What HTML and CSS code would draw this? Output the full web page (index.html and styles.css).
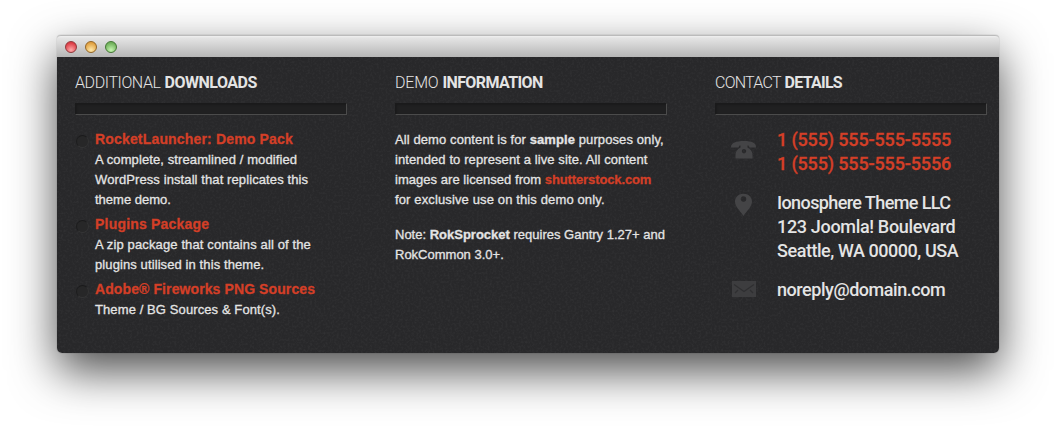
FILE: index.html
```
<!DOCTYPE html>
<html lang="en">
<head>
<meta charset="utf-8">
<title>Ionosphere Theme</title>
<link rel="stylesheet" href="styles.css">
</head>
<body>
<main class="window">
  <header class="titlebar">
    <span class="light red"></span><span class="light amber"></span><span class="light green"></span>
  </header>
  <div class="content">
    <svg class="grain" width="942" height="296" aria-hidden="true">
      <filter id="grain"><feTurbulence type="fractalNoise" baseFrequency="0.45" numOctaves="2" seed="4"/><feColorMatrix values="0 0 0 0 1  0 0 0 0 1  0 0 0 0 1  0.5 0 0 0 -0.2"/></filter>
      <rect width="942" height="296" filter="url(#grain)"/>
    </svg>
    <section class="column">
      <h2><span class="h1a">ADDITIONAL</span> <b class="h1b">DOWNLOADS</b></h2>
      <div class="divider"></div>
      <ul class="downloads">
        <li><a class="l1">RocketLauncher: Demo Pack</a><br><span class="l2">A complete, streamlined / modified</span><br><span class="l3">WordPress install that replicates this</span><br><span class="l4">theme demo.</span></li>
        <li><a class="l5">Plugins Package</a><br><span class="l6">A zip package that contains all of the</span><br><span class="l7">plugins utilised in this theme.</span></li>
        <li><a class="l8">Adobe® Fireworks PNG Sources</a><br><span class="l9">Theme / BG Sources &amp; Font(s).</span></li>
      </ul>
    </section>
    <section class="column">
      <h2><span class="h2a">DEMO</span> <b class="h2b">INFORMATION</b></h2>
      <div class="divider"></div>
      <p><span class="m1">All demo content is for <b>sample</b> purposes only,</span><br><span class="m2">intended to represent a live site. All content</span><br><span class="m3">images are licensed from <a>shutterstock.com</a></span><br><span class="m4">for exclusive use on this demo only.</span></p>
      <p><span class="m5">Note: <b>RokSprocket</b> requires Gantry 1.27+ and</span><br><span class="m6">RokCommon 3.0+.</span></p>
    </section>
    <section class="column">
      <h2><span class="h3a">CONTACT</span> <b class="h3b">DETAILS</b></h2>
      <div class="divider"></div>
      <div class="contact phone">
        <svg width="28" height="20" viewBox="0 0 28 20"><path fill-rule="evenodd" d="M1 7C1 3 6 1 14 1s12 2 12 6v.5h-6.500L18.500 5.500h-1V7.500C21 9 22.500 12 22.500 15v3.500H5.500V15c0-3 1.500-6 5-7.500V5.500h-1L8.500 7.500H1zM14 9a2.200 2.200 0 1 0 .01 0z"/></svg>
        <div><span class="c1">1 (555) 555-555-5555</span><br><span class="c1">1 (555) 555-555-5556</span></div>
      </div>
      <div class="contact address">
        <svg width="28" height="24" viewBox="0 0 28 24"><path fill-rule="evenodd" d="M13.500 .7C8.500.7 5 4.200 5 8.500c0 5 4.500 8.500 8.500 14.500C17.500 17 22 13.500 22 8.500 22 4.200 18.500.7 13.500.7zM13.500 3.200a2.800 2.800 0 1 1-.01 0z"/></svg>
        <div><span class="c3">Ionosphere Theme LLC</span><br><span class="c4">123 Joomla! Boulevard</span><br><span class="c5">Seattle, WA 00000, USA</span></div>
      </div>
      <div class="contact mail">
        <svg width="28" height="18" viewBox="0 0 28 18"><path d="M2 1h24v16H2z"/><path class="fold" d="M4 4.500l10 7 10-7M5 13l3-3M23 13l-3-3"/></svg>
        <div><span class="c6">noreply@domain.com</span></div>
      </div>
    </section>
  </div>
</main>
</body>
</html>
```
FILE: styles.css
```
body { margin: 0; padding: 35px 57px 0; height: 432px; box-sizing: border-box; overflow: hidden; background: #fff; }
.window { width: 942px; height: 318px; border-radius: 4px 4px 5px 5px; box-shadow: 0 0 1px rgba(0,0,0,.5), 0 18px 46px rgba(0,0,0,.7); }
.titlebar { height: 22px; box-sizing: border-box; padding: 5px 8px; display: flex; gap: 8px; border-top: 1px solid #bbb; border-radius: 4px 4px 0 0; background: linear-gradient(#f0f0f0 0, #e4e4e4 2px, #b6b6b6 100%); }
.light { width: 12px; height: 12px; box-sizing: border-box; border-radius: 50%; border: 1px solid; }
.red { border-color: #91383b; background: radial-gradient(circle at 50% 80%, #ffaaaa, #dc3c45 75%); }
.amber { border-color: #936525; background: radial-gradient(circle at 50% 80%, #ffe9aa, #e0a040 75%); }
.green { border-color: #437633; background: radial-gradient(circle at 50% 80%, #c5f5b0, #6fb05a 75%); }
.content { position: relative; height: 296px; box-sizing: border-box; padding: 15px 12px 0 18px; display: grid; grid-template-columns: repeat(3, 272px); column-gap: 48px; background: #28282a; border-radius: 0 0 5px 5px; overflow: hidden; color: #e4e4e4; font: 13px/20px "Liberation Sans", Arial, sans-serif; white-space: nowrap; }
.grain { position: absolute; left: 0; top: 0; opacity: .18; }
.column { position: relative; min-width: 0; }
h2 { margin: 0; font: 300 16px/21px Roboto, sans-serif; height: 31px; }
h2 b { font-weight: 700; }
.divider { height: 12px; box-sizing: border-box; background: #202021; border: 1px solid #1a1a1b; border-right-color: #4b4b4b; border-bottom-color: #4b4b4b; margin-bottom: 15px; box-shadow: inset 1px 1px 2px rgba(0,0,0,.2); }
a { color: #d43f27; font-weight: 700; }
.downloads { list-style: none; margin: 0; padding: 0; }
.downloads li { position: relative; padding-left: 20px; margin-bottom: 5px; -webkit-text-stroke: .3px; }
.downloads li a { display: inline-block; height: 20px; vertical-align: top; font-size: 14px; line-height: 19px; }
.downloads li::before { content: ""; position: absolute; left: 1px; top: 5px; width: 13px; height: 13px; box-sizing: border-box; border-radius: 50%; border: 1px solid; border-color: #1b1b1c #333334 #363637 #1d1d1e; background: #272728; }
p { margin: 0 0 15px; -webkit-text-stroke: .3px; }
.contact { display: flex; gap: 19px; padding-left: 15px; font: 500 18px/24px Roboto, sans-serif; }
.contact svg { flex: none; fill: #444446; }
.contact.mail svg { fill: #3d3d3f; }
.contact .fold { fill: none; stroke: #2f2f31; stroke-width: 1.3; }
.phone { color: #d43f27; margin: -2px 0 15px; -webkit-text-stroke: .3px; }
.phone svg { margin-top: 12px; }
.address { margin-bottom: 15px; }
.address svg { margin-top: 2px; }
.mail svg { margin-top: 2px; }
/* tracking for individual lines */
.h1a { letter-spacing: -.4px; } .h1b { letter-spacing: -.5px; }
.h2a { letter-spacing: -.2px; } .h2b { letter-spacing: -.6px; }
.h3a { letter-spacing: -.75px; } .h3b { letter-spacing: -.75px; }
.l1 { letter-spacing: .17px; } .l5 { letter-spacing: .2px; } .l8 { letter-spacing: .1px; }
.l2, .l3, .l7, .l9, .m1, .m2 { letter-spacing: .1px; }
.l6, .m4 { letter-spacing: .13px; }
.m3 { letter-spacing: .04px; } .m3 a { letter-spacing: -.12px; }
.c1 { letter-spacing: -.14px; }
.c3 { letter-spacing: -.6px; } .c4 { letter-spacing: -.33px; }
.c5, .c6 { letter-spacing: -.45px; }
```
